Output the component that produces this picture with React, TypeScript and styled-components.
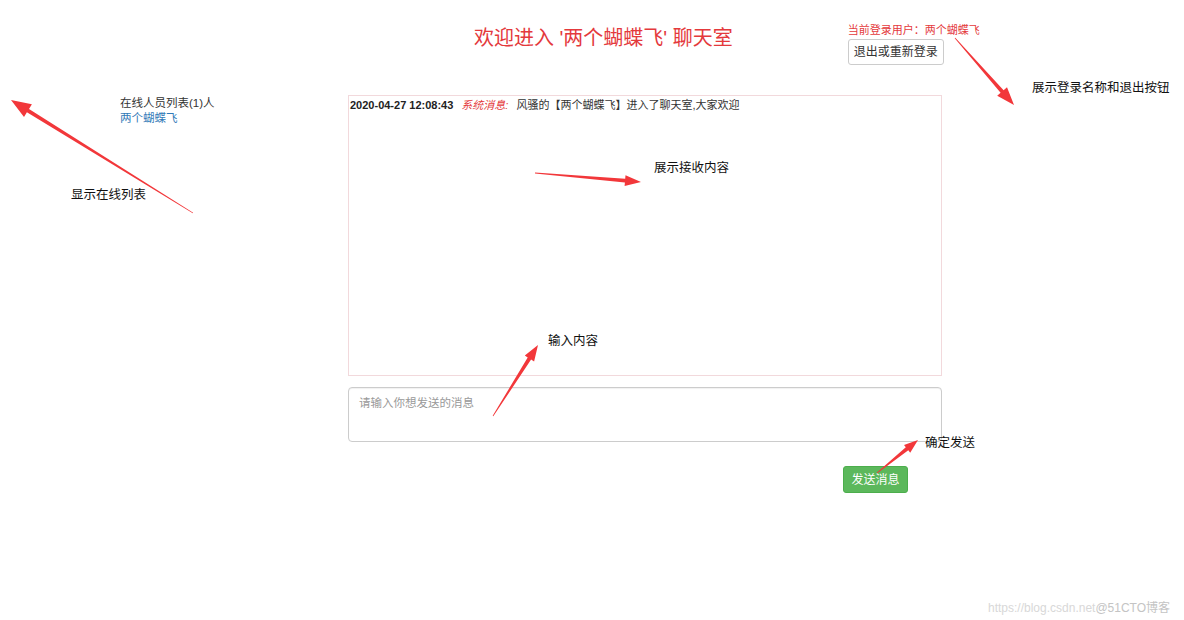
import React, { FC } from 'react'
import styled, { createGlobalStyle } from 'styled-components'

const GlobalStyle = createGlobalStyle`
    html, body {
        margin: 0;
        padding: 0;
        background: #fff;
    }
    body {
        font-family: "Liberation Sans", "Noto Sans CJK SC", sans-serif;
        color: #333;
    }
`

const Page = styled.div`
    position: relative;
    width: 1184px;
    height: 620px;
    overflow: hidden;
    background: #fff;
`

const Header = styled.div`
    display: flex;
    align-items: flex-start;
    padding: 24px 0 0 474px;
    height: 95px;
    box-sizing: border-box;
`

const Title = styled.h1`
    margin: 2px 0 0;
    font-size: 20px;
    font-weight: normal;
    line-height: 24px;
    color: #e4393c;
    white-space: nowrap;
`

const UserBox = styled.div`
    margin-left: 115px;
    display: flex;
    flex-direction: column;
    align-items: flex-start;
`

const UserName = styled.span`
    font-size: 11px;
    line-height: 13px;
    color: #e4393c;
    white-space: nowrap;
`

const Button = styled.button<{ $variant?: 'default' | 'success' }>`
    font-family: inherit;
    font-size: 12px;
    line-height: 14px;
    border-radius: 3px;
    cursor: pointer;
    padding: 0;
    background: ${p => (p.$variant === 'success' ? '#5cb85c' : '#fff')};
    color: ${p => (p.$variant === 'success' ? '#fff' : '#333')};
    border: 1px solid ${p => (p.$variant === 'success' ? '#4cae4c' : '#ccc')};
`

const LogoutButton = styled(Button)`
    margin-top: 2px;
    width: 96px;
    height: 26px;
`

const Body = styled.div`
    display: grid;
    grid-template-columns: 348px 594px;
`

const OnlineList = styled.div`
    padding: 1px 0 0 120px;
    font-size: 11.5px;
    line-height: 15px;
`

const OnlineTitle = styled.div`
    color: #333;
`

const OnlineUser = styled.div`
    color: #337ab7;
`

const ChatColumn = styled.div`
    display: flex;
    flex-direction: column;
`

const MessageBox = styled.div`
    height: 281px;
    box-sizing: border-box;
    border: 1px solid #f2d9dc;
    padding: 2px 1px;
    font-size: 11px;
    line-height: 14px;
`

const MessageLine = styled.div`
    display: flex;
    gap: 8px;
    white-space: nowrap;
`

const Time = styled.span`
    font-weight: bold;
    color: #222;
`

const SystemTag = styled.span`
    font-style: italic;
    color: #e4393c;
`

const Input = styled.textarea`
    margin-top: 11px;
    height: 55px;
    box-sizing: border-box;
    border: 1px solid #ccc;
    border-radius: 4px;
    padding: 6px 10px;
    resize: none;
    font-family: inherit;
    font-size: 11.5px;
    outline: none;
    box-shadow: inset 0 1px 1px rgba(0, 0, 0, 0.06);

    &::placeholder {
        color: #999;
    }
`

const SendRow = styled.div`
    display: flex;
    padding: 24px 0 0 495px;
`

const SendButton = styled(Button)`
    width: 65px;
    height: 27px;
`

const Note = styled.span<{ $x: number, $y: number }>`
    position: absolute;
    left: ${p => p.$x}px;
    top: ${p => p.$y}px;
    font-size: 12.5px;
    line-height: 15px;
    color: #111;
    white-space: nowrap;
`

const Watermark = styled.div`
    position: absolute;
    left: 988px;
    top: 598px;
    font-size: 12px;
    color: #d8d8d8;
    white-space: nowrap;

    b {
        font-weight: normal;
        color: #c4c4c4;
    }
`

const Overlay = styled.svg`
    position: absolute;
    left: 0;
    top: 0;
    pointer-events: none;
`

type ArrowDef = { x1: number, y1: number, x2: number, y2: number, head: number, width: number }

const arrows: ArrowDef[] = [
    { x1: 193, y1: 213, x2: 11, y2: 100, head: 20, width: 15 },
    { x1: 535, y1: 173, x2: 641, y2: 182, head: 16, width: 11 },
    { x1: 955, y1: 38, x2: 1014, y2: 105, head: 18, width: 13 },
    { x1: 493, y1: 416, x2: 538, y2: 345, head: 16, width: 11 },
    { x1: 877, y1: 473, x2: 918, y2: 440, head: 14, width: 10 },
]

const arrowPoints = ({ x1, y1, x2, y2, head, width }: ArrowDef) => {
    const len = Math.hypot(x2 - x1, y2 - y1)
    const dx = (x2 - x1) / len
    const dy = (y2 - y1) / len
    const nx = -dy
    const ny = dx
    const bx = x2 - dx * head
    const by = y2 - dy * head
    const pts = [
        [x1 + nx * 0.4, y1 + ny * 0.4],
        [bx + nx * 2, by + ny * 2],
        [bx + nx * width / 2, by + ny * width / 2],
        [x2, y2],
        [bx - nx * width / 2, by - ny * width / 2],
        [bx - nx * 2, by - ny * 2],
        [x1 - nx * 0.4, y1 - ny * 0.4],
    ]
    return pts.map(p => p.map(v => v.toFixed(1)).join(',')).join(' ')
}

const App: FC = () => {
    return (
        <>
            <GlobalStyle />
            <Page>
                <Header>
                    <Title>欢迎进入 '两个蝴蝶飞' 聊天室</Title>
                    <UserBox>
                        <UserName>当前登录用户：两个蝴蝶飞</UserName>
                        <LogoutButton>退出或重新登录</LogoutButton>
                    </UserBox>
                </Header>

                <Body>
                    <OnlineList>
                        <OnlineTitle>在线人员列表(1)人</OnlineTitle>
                        <OnlineUser>两个蝴蝶飞</OnlineUser>
                    </OnlineList>

                    <ChatColumn>
                        <MessageBox>
                            <MessageLine>
                                <Time>2020-04-27 12:08:43</Time>
                                <SystemTag>系统消息:</SystemTag>
                                <span>风骚的【两个蝴蝶飞】进入了聊天室,大家欢迎</span>
                            </MessageLine>
                        </MessageBox>
                        <Input placeholder="请输入你想发送的消息" />
                        <SendRow>
                            <SendButton $variant="success">发送消息</SendButton>
                        </SendRow>
                    </ChatColumn>
                </Body>

                <Note $x={71} $y={188}>显示在线列表</Note>
                <Note $x={654} $y={161}>展示接收内容</Note>
                <Note $x={1032} $y={81}>展示登录名称和退出按钮</Note>
                <Note $x={548} $y={334}>输入内容</Note>
                <Note $x={925} $y={436}>确定发送</Note>

                <Overlay width={1184} height={620}>
                    {arrows.map((a, i) => (
                        <polygon key={i} points={arrowPoints(a)} fill="#f2373a" />
                    ))}
                </Overlay>

                <Watermark>https://blog.csdn.net<b>@51CTO博客</b></Watermark>
            </Page>
        </>
    )
}

export default App
